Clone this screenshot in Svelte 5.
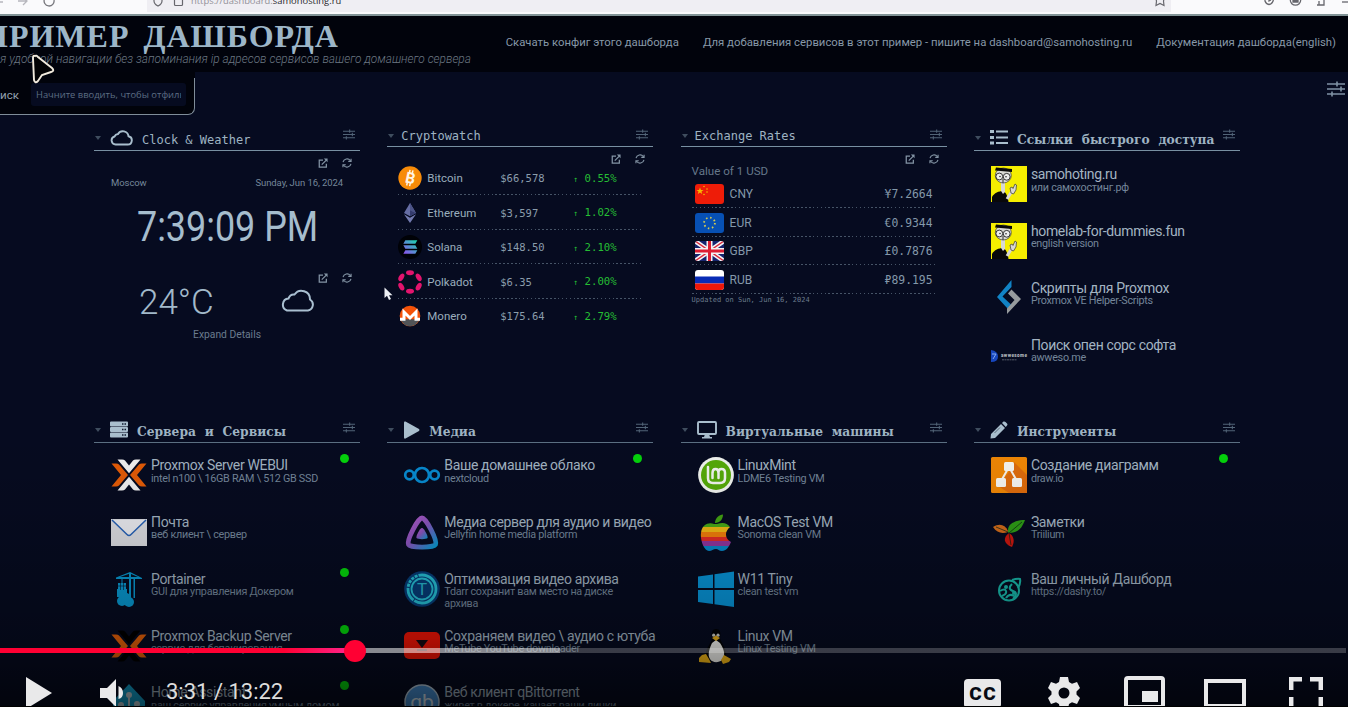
<script>
  const cross = (inner, outer) => `<path d="M6.500 2.500H11Q13 2.500 14 3.500L18 8.500L22 3.500Q23 2.500 25 2.500H29.500L18 16.300ZM6.500 33.500H11Q13 33.500 14 32.500L18 27.500L22 32.500Q23 33.500 25 33.500H29.500L18 19.700Z" fill="${inner}"/><path d="M.5 6.500H5Q7 6.500 8 7.500L17 18L8 28.500Q7 29.500 5 29.500H.5L10 18ZM35.500 6.500H31Q29 6.500 28 7.500L19 18L28 28.500Q29 29.500 31 29.500H35.500L26 18Z" fill="${outer}"/>`;
  const icons = {
    dummy: `<rect width="36" height="36" fill="#f5ee00"/><path d="M1 36V31C3 27 8 25 12 25C15 26 17 31 17.500 36Z" fill="#08080a"/><path d="M10 16h4v10l-2 2-2-3z" fill="#d8d8d4"/><ellipse cx="12.300" cy="9.500" rx="8" ry="7.500" fill="#d8d8d4" stroke="#222" stroke-width=".6"/><path d="M5 1.500L21 3V6L4 4.500Z" fill="#090909"/><circle cx="8.300" cy="10.500" r="3.400" fill="#eee" stroke="#222" stroke-width=".9"/><circle cx="15.700" cy="10.800" r="3.400" fill="#eee" stroke="#222" stroke-width=".9"/><circle cx="9" cy="10.500" r=".7"/><circle cx="15" cy="10.800" r=".7"/><path d="M12 13v4" stroke="#333"/><path d="M16 33L21 25" stroke="#d8d8d4" stroke-width="3"/><path d="M20 27L19 22L21 21L22 22.500L24 18L25.500 19L25 24L22.500 28Z" fill="#d8d8d4" stroke="#333" stroke-width=".7"/>`,
    scripts: `<path d="M20.500 1V8L11.500 17.500L20 25.500L16.500 29.500L6 18Z" fill="#1183c5" transform="translate(0 -1)"/><path d="M20.500 9.500L30 19L16 34V28.500L23.500 20L17 13.500Z" fill="#969b9d"/>`,
    awwesome: `<path d="M0 13Q7 14 7 19.500Q7 25 0 25Z" fill="#1746bd"/><path d="M1 17h4l-3 5" fill="none" stroke="#83a9ed"/><text x="10" y="20" font-family="Roboto" font-weight="900" font-size="4.600" fill="#b3b8bd" textLength="26">awwesome</text><path d="M11 22.800h15" stroke="#69717c" stroke-width=".8" stroke-dasharray="2 .5"/>`,
    proxmox: cross('#f1f1f1', '#e35b07'),
    mail: `<rect y="5" width="36" height="27" fill="#d9dadf"/><path d="M1 6H35L20 21Q18 23 16 21Z" fill="#e9eaef"/><path d="M1 6L16 20.500Q18 22.500 20 20.500L35 6" fill="none" stroke="#2761b5" stroke-width="1.500"/>`,
    portainer: `<g fill="#0898d0"><path d="M5 6.500L19 1L31 7V8H5Z"/><path d="M9 6L19 2.500L27 6Z" fill="#071022"/><path d="M18 2h2v26h-2zM22.500 7h1.500v20h-1.500zM10.500 7h1v6h-1z"/><path d="M7 12h8v8H7zM6 18h10v8H6z"/><circle cx="11" cy="30" r="5"/><circle cx="18" cy="31" r="5"/><circle cx="15" cy="27" r="5"/></g><path d="M7 15h8M9.500 12v7M12.500 12v7" stroke="#061225" stroke-width=".6"/>`,
    backup: cross('#000', '#e35f08'),
    home: `<path d="M18 0L34 17V35H2V17Z" fill="#12a6d3"/><path d="M18 12V34M18 28L26 21M18 29L10 22" stroke="#c9d8dd" stroke-width="2"/><circle cx="18" cy="11" r="3" fill="#c9d8dd"/><circle cx="26" cy="20" r="3" fill="#c9d8dd"/><circle cx="10" cy="21" r="3" fill="#c9d8dd"/>`,
    nextcloud: `<g fill="none" stroke="#078ad0" stroke-width="2.700"><circle cx="18" cy="18" r="7"/><circle cx="5.500" cy="18" r="4.300"/><circle cx="30.500" cy="18" r="4.300"/></g>`,
    jellyfin: `<defs><linearGradient id="jelly" x1="0" y1="0" x2="1" y2="1"><stop stop-color="#b35aca"/><stop offset=".45" stop-color="#8753bb"/><stop offset="1" stop-color="#0798ce"/></linearGradient></defs><path d="M18 4C22 4 33.500 26 31.500 30.500C29.500 34 6.500 34 4.500 30.500C2.500 26 14 4 18 4Z" fill="none" stroke="url(#jelly)" stroke-width="4.800"/><path d="M18 14C20 14 24.500 22.500 23.500 24C22.500 25.500 13.500 25.500 12.500 24C11.500 22.500 16 14 18 14Z" fill="url(#jelly)"/>`,
    tdarr: `<circle cx="18" cy="18" r="17.800" fill="#063c76"/><g fill="none" stroke="#26bcd2"><circle cx="18" cy="18" r="14" stroke-width="2.800" stroke-dasharray="30 1 14 1 3 1 3 1 3 1 3 1"/><circle cx="18" cy="18" r="10.500" stroke-width="1.800"/></g><text x="18" y="24" text-anchor="middle" font-family="Roboto" font-size="17" fill="#26b4c9">T</text>`,
    metube: `<rect y="4" width="36" height="27" rx="5" fill="#f01405"/><path d="M12 12H24L18 20Z" fill="#150a12"/><path d="M13 22h10" stroke="#6c2022" stroke-width="2"/>`,
    qb: `<circle cx="18" cy="18" r="17" fill="#4790d4" stroke="#b9cddd" stroke-width="1.500"/><text x="18" y="24.500" text-anchor="middle" font-family="Roboto" font-size="21" fill="#dceaf4">qb</text>`,
    mint: `<circle cx="18" cy="18" r="17.900" fill="#f1f4ef"/><circle cx="18" cy="18" r="15" fill="#55aa08"/><path d="M10 10V21Q10 26 15 26H22Q27 26 27 21V16Q27 12 23.500 12Q20.500 12 20.500 15V21M20.500 16Q20.500 12 17.500 12Q14.500 12 14.500 16V21" fill="none" stroke="#f2f5ef" stroke-width="2.500" stroke-linecap="round"/>`,
    apple: `<defs><clipPath id="appleClip"><path d="M19 10C25 8 29 9 32 13C26 18 27 25 33 28C31 33 28 37 24 37C21 37 20 35 18 35C15 35 14 37 11 37C6 37 2 26 3 19C4 10 11 8 16 10Z"/></clipPath></defs><path d="M17 9C17 4 21 1 25 .5C25 5 22 9 17 9Z" fill="#43a313"/><g clip-path="url(#appleClip)"><path d="M0 8h36v5H0z" fill="#48a817"/><path d="M0 13h36v5H0z" fill="#eeb714"/><path d="M0 18h36v5H0z" fill="#ef7d0b"/><path d="M0 23h36v4H0z" fill="#df2b26"/><path d="M0 27h36v5H0z" fill="#8e359b"/><path d="M0 32h36v5H0z" fill="#0786c5"/></g>`,
    windows: `<path d="M0 5.500L15 3.500V17H0ZM16.500 3.200L36 .5V17H16.500ZM0 19H15V33L0 31ZM16.500 19H36V36L16.500 33.200Z" fill="#0793d6"/>`,
    tux: `<path d="M18 1C14 1 13 5 14 10C14 15 7 20 8 28C9 36 28 36 28 28C29 21 23 15 22 10C23 4 22 1 18 1Z" fill="#020305"/><path d="M14 15L18 12L22 15C26 21 28 27 24 32C21 35 14 35 12 31C9 27 12 19 14 15Z" fill="#f4f4f0"/><circle cx="15.700" cy="7.200" r="1.600" fill="#cfcfc8"/><circle cx="20" cy="7.200" r="1.600" fill="#cfcfc8"/><path d="M14 10L18 7.500L22 10L18 13Z" fill="#e7ae19"/><path d="M4 27L8 26L11 31L13 35L1 34L1 30ZM26 27L33 31L31 34L25 36L23 32Z" fill="#f4b817"/>`,
    drawio: `<rect width="36" height="36" rx="1.500" fill="#f08705"/><path d="M23 5L36 18V36H18L7 29L18 15Z" fill="#df6c0c"/><path d="M18 10L10 24M18 10L26 24" stroke="#f6f3ef" stroke-width="2"/><g fill="#f7f6f2"><rect x="13" y="5" width="10" height="9" rx="1.500"/><rect x="5" y="21" width="10" height="9" rx="1.500"/><rect x="21" y="21" width="10" height="9" rx="1.500"/></g>`,
    trilium: `<path d="M17 18C16 10 24 6 34 6C31 14 27 19 18 19Z" fill="#2d9c16"/><path d="M17 17C14 10 8 9 2 13C6 19 11 20 17 18Z" fill="#cf6a1a"/><path d="M18 19C12 23 12 30 21 33C24 27 23 22 18 19Z" fill="#c8160e"/><path d="M18 19L31 8M17 18L5 13M18 19L20 31" stroke="#082014" stroke-width=".7"/>`,
    dashy: `<g fill="none" stroke="#18b3a6" stroke-width="2"><circle cx="18" cy="19.500" r="10"/><path d="M21 9Q27 7 29 8Q30 12 27 17M9 20Q14 17 15 20T11 25M21 13Q16 18 22 20T22 28M15 27Q18 22 23 25"/></g><circle cx="15" cy="16" r="2" fill="#18b3a6"/><circle cx="23" cy="22" r="2" fill="#18b3a6"/>`,
    btc: `<circle cx="18" cy="18" r="17.500" fill="#f78b08"/><g transform="rotate(12 18 18)"><path d="M15.500 6V11M20 6V11M15.500 25V30M20 25V30" stroke="#fff4e4" stroke-width="2.200"/><text x="18.500" y="26" text-anchor="middle" font-family="Roboto" font-weight="700" font-size="23" fill="#fff4e4">B</text></g>`,
    eth: `<path d="M18 3L27 18L18 23L9 18Z" fill="#656da4"/><path d="M18 3L27 18L18 14Z" fill="#4c5487"/><path d="M18 14L27 18L18 23Z" fill="#343b6d"/><path d="M9 20L18 25L27 20L18 33Z" fill="#737bb0"/>`,
    sol: `<defs><linearGradient id="sol" x1="0" y1="1" x2="1" y2="0"><stop stop-color="#8f4df0"/><stop offset="1" stop-color="#18d9ad"/></linearGradient></defs><circle cx="18" cy="18" r="18" fill="#000207"/><path d="M11 8H29L26 13H8ZM8 15.500H26L29 20.500H11ZM11 23H29L26 28H8Z" fill="url(#sol)"/>`,
    dot: `<g fill="#e3146d"><ellipse cx="18" cy="4" rx="6" ry="3.700"/><ellipse cx="18" cy="32" rx="6" ry="3.700"/><ellipse cx="5" cy="11" rx="3.700" ry="6.200" transform="rotate(30 5 11)"/><ellipse cx="31" cy="11" rx="3.700" ry="6.200" transform="rotate(-30 31 11)"/><ellipse cx="5" cy="25" rx="3.700" ry="6.200" transform="rotate(-30 5 25)"/><ellipse cx="31" cy="25" rx="3.700" ry="6.200" transform="rotate(30 31 25)"/></g>`,
    xmr: `<circle cx="18" cy="18" r="15.500" fill="#f45208"/><path d="M4 23H32Q28 33.500 18 33.500Q8 33.500 4 23Z" fill="#515457"/><path d="M3 23H9V12L18 21L27 12V23H33" fill="none" stroke="#fff" stroke-width="4.500"/>`,
    cn: `<rect width="29" height="20" fill="#ee1c08"/><path d="M5 3.500L6 6H8.500L6.500 7.500L7.200 10L5 8.500L2.800 10L3.500 7.500L1.500 6H4Z" fill="#f6b900"/><g fill="#f6b900"><circle cx="9" cy="2.500" r=".8"/><circle cx="12" cy="5" r=".8"/><circle cx="12" cy="8" r=".8"/><circle cx="9" cy="10.500" r=".8"/></g>`,
    eu: `<rect width="29" height="20" fill="#0750b4"/><circle cx="14.500" cy="10" r="5.400" fill="none" stroke="#d4cc54" stroke-width="1.800" stroke-dasharray="1.500 2.740"/>`,
    gb: `<rect width="29" height="20" fill="#16246e"/><path d="M0 0L29 20M29 0L0 20" stroke="#f4f2f4" stroke-width="4.500"/><path d="M0 0L29 20M29 0L0 20" stroke="#dc2638" stroke-width="1.400"/><path d="M14.500 0V20M0 10H29" stroke="#f4f2f4" stroke-width="6"/><path d="M14.500 0V20M0 10H29" stroke="#dd1d32" stroke-width="3"/>`,
    ru: `<rect width="29" height="20" fill="#fff"/><path d="M0 6.500H29V13.500H0Z" fill="#082bb5"/><path d="M0 13.500H29V20H0Z" fill="#ed1708"/>`
  };
  const glyphs = {
    cloud: { w: 23, h: 17, d: `<path d="M6 15.500H17.500A4.200 4.200 0 0 0 18.500 7.200A5.700 5.700 0 0 0 8 5A4.200 4.200 0 0 0 4.500 7.500A4.100 4.100 0 0 0 6 15.500Z" fill="none" stroke="currentColor" stroke-width="1.900"/>` },
    list: { w: 18, h: 16, d: `<path d="M0 1h4v3H0zM0 7h4v3H0zM0 12.500h4v3H0zM6 1.500h12v2H6zM6 7.500h12v2H6zM6 13h12v2H6z" fill="currentColor"/>` },
    server: { w: 18, h: 17, d: `<path d="M1 .5h16q1 0 1 1v3q0 1-1 1H1q-1 0-1-1v-3q0-1 1-1ZM1 6h16q1 0 1 1v3q0 1-1 1H1q-1 0-1-1V7q0-1 1-1ZM1 11.500h16q1 0 1 1v3q0 1-1 1H1q-1 0-1-1v-3q0-1 1-1Z" fill="currentColor"/><path d="M12 3h1.500M14.500 3H16M12 8.500h1.500M14.500 8.500H16M12 14h1.500M14.500 14H16" stroke="#101b30" stroke-width="1.300"/>` },
    play: { w: 17, h: 18, d: `<path d="M1 1.500Q1 0 2.500 .6L16 8Q17 9 16 10L2.500 17.500Q1 18 1 16.500Z" fill="currentColor"/>` },
    desktop: { w: 20, h: 18, d: `<rect x="1" y="1" width="18" height="12" rx="1" fill="none" stroke="currentColor" stroke-width="1.900"/><path d="M8 13h4l1 3h2v1.600H5V16h2z" fill="currentColor"/>` },
    pen: { w: 18, h: 18, d: `<path d="M1 13L11 3L15 7L5 17L.5 17.500ZM12 2L13.500 .6Q14.500 0 15.500 1L17 2.500Q18 3.500 17 4.600L15.800 6Z" fill="currentColor"/><path d="M4.500 12L10 6.500" stroke="#07101f" stroke-width=".5"/>` }
  };
  const rows = [
    [
      { kind: 'clock', title: 'Clock & Weather', glyph: 'cloud' },
      { kind: 'crypto', title: 'Cryptowatch' },
      { kind: 'rates', title: 'Exchange Rates' },
      { kind: 'links', title: 'Ссылки быстрого доступа', glyph: 'list', serif: true, items: [
        ['dummy', 'samohoting.ru', 'или самохостинг.рф'], ['dummy', 'homelab-for-dummies.fun', 'english version'],
        ['scripts', 'Скрипты для Proxmox', 'Proxmox VE Helper-Scripts'], ['awwesome', 'Поиск опен сорс софта', 'awweso.me']] }
    ],
    [
      { kind: 'links', title: 'Сервера и Сервисы', glyph: 'server', serif: true, items: [
        ['proxmox', 'Proxmox Server WEBUI', 'intel n100 \\ 16GB RAM \\ 512 GB SSD', true], ['mail', 'Почта', 'веб клиент \\ сервер'],
        ['portainer', 'Portainer', 'GUI для управления Докером', true], ['backup', 'Proxmox Backup Server', 'сервис для бепакирования', true],
        ['home', 'Home Assistant', 'ваш сервис управления умным домом', true]] },
      { kind: 'links', title: 'Медиа', glyph: 'play', serif: true, items: [
        ['nextcloud', 'Ваше домашнее облако', 'nextcloud', true], ['jellyfin', 'Медиа сервер для аудио и видео', 'Jellyfin home media platform'],
        ['tdarr', 'Оптимизация видео архива', 'Tdarr сохранит вам место на диске архива'], ['metube', 'Сохраняем видео \\ аудио с ютуба', 'MeTube YouTube downloader'],
        ['qb', 'Веб клиент qBittorrent', 'живет в докере, качает ваши линки']] },
      { kind: 'links', title: 'Виртуальные машины', glyph: 'desktop', serif: true, items: [
        ['mint', 'LinuxMint', 'LDME6 Testing VM'], ['apple', 'MacOS Test VM', 'Sonoma clean VM'], ['windows', 'W11 Tiny', 'clean test vm'], ['tux', 'Linux VM', 'Linux Testing VM']] },
      { kind: 'links', title: 'Инструменты', glyph: 'pen', serif: true, items: [
        ['drawio', 'Создание диаграмм', 'draw.io', true], ['trilium', 'Заметки', 'Triilium'], ['dashy', 'Ваш личный Дашборд', 'https://dashy.to/']] }
    ]
  ];
  const coins = [['btc', 'Bitcoin', '$66,578', '0.55%'], ['eth', 'Ethereum', '$3,597', '1.02%'], ['sol', 'Solana', '$148.50', '2.10%'], ['dot', 'Polkadot', '$6.35', '2.00%'], ['xmr', 'Monero', '$175.64', '2.79%']];
  const rates = [['cn', 'CNY', '¥7.2664'], ['eu', 'EUR', '€0.9344'], ['gb', 'GBP', '£0.7876'], ['ru', 'RUB', '₽89.195']];
</script>

{#snippet sliders(cls)}
  <svg class={cls} viewBox="0 0 18 16" fill="none" stroke="currentColor" stroke-width="1.600"><path d="M0 3H18M0 8H18M0 13H18M10 .5V5.500M14 5.500V10.500M5 10.500V15.500" /></svg>
{/snippet}
{#snippet actions()}
  <div class="actions">
    <svg viewBox="0 0 12 12" fill="none" stroke="currentColor" stroke-width="1.500"><path d="M6 2.500H1.500V11H10V7M4.500 8L10 2.500" /><path d="M7 .5H11.500V5Z" fill="currentColor" stroke="none" /></svg>
    <svg viewBox="0 0 12 12" fill="none" stroke="currentColor" stroke-width="1.300"><path d="M1.200 5A5 5 0 0 1 10 3M10.800 7A5 5 0 0 1 2 9M10.900 .8V4H7.500M1.100 11.200V8H4.500" /></svg>
  </div>
{/snippet}

<div class="screen">
  <div class="browser">
    <svg class="nav-icons" viewBox="0 0 147 15" fill="none" stroke="#77777d" stroke-width="1.300"><path d="M0 2H3M18 1H27M23-3L27 1L23 5" stroke="#b7b7bd" /><path d="M44.500-1A5 5 0 1 0 54 0" /></svg>
    <div class="url">
      <svg viewBox="0 0 40 15" fill="none" stroke="#67676d" stroke-width="1.200"><path d="M7-2V1Q7 4 11 6Q15 4 15 1V-2" /><rect x="27.500" y="-1" width="8" height="6.500" rx="1" /></svg>
      <p>https://dashboard.<b>samohosting.ru</b></p>
      <svg class="star" viewBox="0 0 14 15" fill="none" stroke="#67676d" stroke-width="1.200"><path d="M3-1L3.500 1L3 5.500L7 3.500L11 5.500L10.500 1L11-1" /></svg>
    </div>
    <svg class="tools" viewBox="0 0 90 15" fill="none" stroke="#67676d" stroke-width="1.300"><path d="M7-2V1Q8 4 11 4.500Q15 4 15.500-1M11-1V1L13 0" /><circle cx="37.500" cy="0" r="5.200" /><path d="M35 2H40V0H35Z" fill="#67676d" /><path d="M58-1H66V5H59M61 1V5" /><path d="M84 2H90" /></svg>
  </div>

  <header>
    <div class="brand"><h1>ПРИМЕР ДАШБОРДА</h1><p>я удобной навигации без запоминания ip адресов сервисов вашего домашнего сервера</p></div>
    <nav><span>Скачать конфиг этого дашборда</span><span>Для добавления сервисов в этот пример - пишите на dashboard@samohosting.ru</span><span>Документация дашборда(english)</span></nav>
  </header>

  <div class="toolbar">
    <div class="search"><span>Поиск</span><div class="field">Начните вводить, чтобы отфильтровать</div></div>
    {@render sliders('settings')}
  </div>

  <main>
    {#each rows as row, r}
      <div class="grid" class:second={r === 1}>
        {#each row as s}
          <section>
            <div class="head" class:short={!s.glyph}>
              <i class="caret"></i>
              {#if s.glyph}<svg class="glyph" style="width:{glyphs[s.glyph].w}px;height:{glyphs[s.glyph].h}px" viewBox="0 0 {glyphs[s.glyph].w} {glyphs[s.glyph].h}">{@html glyphs[s.glyph].d}</svg>{/if}
              <h2 class:serif={s.serif}>{s.title}</h2>
              {@render sliders('tune')}
            </div>
            {#if s.kind === 'clock'}
              {@render actions()}
              <div class="place"><span>Moscow</span><span>Sunday, Jun 16, 2024</span></div>
              <div class="time"><span>7:39:09 PM</span></div>
              {@render actions()}
              <div class="weather"><span>24°C</span><svg viewBox="0 0 36 24" fill="none" stroke="#a9bfd0" stroke-width="2"><path d="M8 21.500H29A6 6 0 0 0 31 10.500A8.500 8.500 0 0 0 15.500 5.500Q11 5 9.500 9.500A6.200 6.200 0 0 0 8 21.500Z" /></svg></div>
              <p class="expand">Expand Details</p>
            {:else if s.kind === 'crypto'}
              {@render actions()}
              <div class="coins">
                {#each coins as c}<div class="coin"><svg viewBox="0 0 36 36">{@html icons[c[0]]}</svg><span>{c[1]}</span><span class="price">{c[2]}</span><span class="change"><small>↑</small> {c[3]}</span></div>{/each}
              </div>
            {:else if s.kind === 'rates'}
              {@render actions()}
              <div class="rates"><p class="base">Value of 1 USD</p>
                {#each rates as q}<div class="rate"><svg viewBox="0 0 29 20">{@html icons[q[0]]}</svg><span>{q[1]}</span><b>{q[2]}</b></div>{/each}
                <p class="updated">Updated on Sun, Jun 16, 2024</p>
              </div>
            {:else}
              <div class="items">
                {#each s.items as it}
                  <div class="item"><svg viewBox="0 0 36 36">{@html icons[it[0]]}</svg><div class="text"><h3>{it[1]}</h3><p>{it[2]}</p></div>{#if it[3]}<i class="status"></i>{/if}</div>
                {/each}
              </div>
            {/if}
          </section>
        {/each}
      </div>
    {/each}
  </main>

  <div class="shade"></div>
  <div class="player">
    <div class="track"><div class="buffered"></div><div class="played"></div><div class="knob"></div></div>
    <div class="controls">
      <svg class="c-play" viewBox="0 0 26 32" fill="#e9e9ea"><path d="M0 0L26 16L0 32Z" /></svg>
      <svg class="c-vol" viewBox="0 0 25 28" fill="#e9e9ea"><path d="M0 9H7L16 0V28L7 19H0ZM18.500 7Q23 9 23 14T18.500 20Z" /></svg>
      <span class="elapsed">3:31 / 13:22</span>
      <div class="right">
        <div class="cc">CC</div>
        <svg class="gear" viewBox="0 0 32 32" fill="#e9e9ea" fill-rule="evenodd"><path d="M12 0H20L21 5L24 6.700L29 5L32 11L28.500 14.500V17.500L32 21L29 27L24 25.300L21 27L20 32H12L11 27L8 25.300L3 27L0 21L3.500 17.500V14.500L0 11L3 5L8 6.700L11 5ZM16 10.500A5.500 5.500 0 1 0 16 21.500A5.500 5.500 0 1 0 16 10.500Z" /></svg>
        <svg class="mini" viewBox="0 0 41 36"><rect x="2" y="2" width="37" height="29" rx="2" fill="none" stroke="#e9e9ea" stroke-width="4" /><path d="M18 15H34V26H18Z" fill="#e9e9ea" /></svg>
        <svg class="wide" viewBox="0 0 42 36"><rect x="2" y="2" width="38" height="25" fill="none" stroke="#e9e9ea" stroke-width="4" /></svg>
        <svg class="full" viewBox="0 0 34 34" fill="none" stroke="#e9e9ea" stroke-width="4.500"><path d="M2.200 13V2.200H13M21 2.200H31.800V13M2.200 20V32H13M21 32H31.800V20" /></svg>
      </div>
    </div>
  </div>
  <svg class="pointer-large" viewBox="0 0 26 31"><path d="M4 2Q2 1 2 4L3 26Q4 30 7 27L11 21L20 18Q24 17 21 14L7 3Q5 1 4 2Z" fill="#020204" stroke="#f1eadd" stroke-width="1.900" /></svg>
  <svg class="pointer-small" viewBox="0 0 9 14"><path d="M.5 .5V11L3 8.800L5 13L7 12L5 8.200H8.500Z" fill="#edf0f4" /></svg>
</div>

<style>
  :global(body) { margin: 0; background: #060b20; }
  .screen { position: relative; width: 1348px; height: 707px; overflow: hidden; background: #060b20; font-family: Roboto, sans-serif; color: #a5b5c2; }
  h1, h2, h3, p { margin: 0; }
  svg { display: block; flex: none; }
  .browser { display: flex; height: 14px; background: #fafafc; border-bottom: 2px solid #819396; overflow: hidden; }
  .nav-icons { width: 147px; height: 15px; }
  .url { width: 1026px; height: 12px; display: flex; background: #efeef3; }
  .url svg { width: 40px; height: 15px; }
  .url p { margin-left: 4px; font: 9.400px/14px "Open Sans", sans-serif; margin-top: -6px; color: #929198; white-space: nowrap; }
  .url b { font-weight: 400; color: #28282c; }
  .url .star { width: 14px; margin-left: auto; margin-right: 4px; }
  .tools { width: 90px; height: 15px; margin-left: 87px; }
  header { height: 56px; background: #01030c; display: flex; justify-content: space-between; }
  .brand { white-space: nowrap; padding-top: 2px; }
  h1 { margin-left: -17px; font: 700 32px/36px "Liberation Serif", serif; letter-spacing: 1px; word-spacing: 5px; color: #9db6c8; }
  .brand p { margin-top: -2px; font: italic 300 11.900px/14px Roboto, sans-serif; color: #8593a0; opacity: .8; }
  nav { display: flex; gap: 24px; padding: 19px 12px 0 0; font-size: 11.350px; line-height: 15px; color: #8798a8; white-space: nowrap; }
  .toolbar { height: 52px; display: flex; justify-content: space-between; }
  .search { box-sizing: border-box; width: 195px; height: 37px; margin-top: 6px; padding-bottom: 3px; display: flex; align-items: center; gap: 12px; background: #01030b; box-shadow: 0 -6px #01030b; border: solid #7f8d99; border-width: 0 1px 1px 0; border-radius: 0 0 7px 0; }
  .search span { width: 19px; display: flex; justify-content: flex-end; font-size: 11.500px; color: #93a1b0; }
  .field { width: 145px; height: 23px; border: solid #060b20; border-width: 0 5px; background: #060b20; border-radius: 3px; font: 9.400px/24px "Open Sans", sans-serif; color: #5d6e84; white-space: nowrap; overflow: hidden; }
  .settings { width: 18px; height: 16px; margin: 9px 3px; color: #8093a5; }
  main { padding-left: 94px; }
  .grid { display: grid; grid-template-columns: repeat(4, 266px); column-gap: 27.300px; height: 293px; }
  .head { box-sizing: border-box; height: 27px; display: flex; align-items: center; border-bottom: 1px solid #7890a2; }
  .head.short { height: 23px; }
  .second .head { height: 26px; border-color: #5c7083; border-bottom-width: 1.500px; }
  .caret { width: 0; border: 3.500px solid transparent; border-top: 4px solid #3f4d5e; border-bottom: 0; margin: 1px 9px 0 1px; }
  .short .caret { margin-right: 7px; }
  .glyph { color: #a9becd; margin-right: 9px; }
  h2 { font: 400 12px/16px "DejaVu Sans Mono", monospace; color: #9eb3c2; white-space: nowrap; padding-top: 5px; }
  .short h2 { padding-top: 2px; }
  h2.serif { font: 700 12.250px/16px "DejaVu Serif", serif; word-spacing: 4.500px; padding-top: 5px; }
  .tune { width: 12px; height: 11px; margin: 5px 5px auto auto; color: #526477; }
  .actions { display: flex; justify-content: flex-end; gap: 14px; padding: 7px 8px 0 0; height: 10px; color: #8495a5; }
  .actions svg { width: 10px; height: 10px; }
  .place { display: flex; justify-content: space-between; margin: 8px 17px 0; font-size: 9.500px; letter-spacing: -.08px; line-height: 14px; color: #75879a; }
  .time { height: 32px; margin: 20px 0 24px 43px; display: flex; align-items: center; }
  .time span { font-size: 43px; line-height: 32px; color: #a6bdcd; white-space: nowrap; transform: scaleX(.835); transform-origin: left; }
  .weather { display: flex; align-items: center; justify-content: space-between; height: 34px; padding: 0 45px 0 45px; margin-top: 2px; }
  .weather span { font-size: 35px; font-weight: 300; color: #a2b9ca; }
  .weather svg { width: 36px; height: 24px; margin-top: -2px; }
  .expand { margin-top: 9px; text-align: center; font-size: 10.300px; line-height: 14px; color: #6b7c8e; }
  .coins { margin: -3px 11px 0; }
  .coin, .rate { background: repeating-linear-gradient(90deg, #465467 0 1.500px, transparent 1.500px 3.900px) 0 100% / 100% 1.300px no-repeat; }
  .coin { height: 34.500px; display: grid; grid-template-columns: 24px 78px 73px 1fr; align-items: center; font-size: 11.500px; color: #9aadbc; }
  .coin:last-child { background: none; }
  .coin svg { width: 24px; height: 24px; }
  .coin svg + span { padding-left: 5px; }
  .price, .change { font: 10.500px "DejaVu Sans Mono", monospace; color: #8b9dac; }
  .change { color: #25bd34; font-size: 10.700px; }
  small { font-size: 8px; }
  .rates { margin: 0 11px; }
  .base { font-size: 11.600px; line-height: 14px; color: #65778a; margin-bottom: 1.500px; }
  .rate { height: 28.700px; display: flex; align-items: center; gap: 6px; padding: 0 3px; font-size: 12px; color: #8498aa; }
  .rate svg { width: 29px; height: 20px; border-radius: 3px; }
  .rate b { margin-left: auto; font: 11.400px "DejaVu Sans Mono", monospace; }
  .updated { font: 7px/12px "DejaVu Sans Mono", monospace; color: #6b7c8d; }
  .items { padding: 15px 0 0 17px; }
  .second .items { padding-top: 14px; }
  .item { position: relative; height: 56.850px; display: flex; gap: 4px; }
  .item svg { width: 36px; height: 36px; overflow: visible; }
  .text { width: 209px; }
  h3 { font-size: 14px; letter-spacing: -.35px; font-weight: 400; line-height: 16px; color: #a3b4c2; white-space: nowrap; }
  .text p { width: 180px; font-size: 10.800px; letter-spacing: -.28px; line-height: 12px; margin-top: -.5px; color: #74869a; }
  .item:nth-child(n + 4) .text p { width: auto; white-space: nowrap; }
  .status { position: absolute; left: 228.500px; top: -3px; width: 9px; height: 9px; border-radius: 50%; background: #04d40b; }
  .shade { position: absolute; inset: 430px 0 0; background: linear-gradient(#0000, rgba(0,0,0,.1) 40%, rgba(0,0,0,.27) 75%, rgba(0,0,0,.6)); }
  .player { position: absolute; left: 0; right: 0; top: 648px; height: 58px; overflow: visible; border-bottom: 1px solid #000; }
  .track { position: relative; width: 1346px; height: 5px; background: rgba(255,255,255,.21); }
  .buffered, .played { position: absolute; left: 0; top: 0; height: 5px; }
  .buffered { width: 560px; background: rgba(255,255,255,.4); }
  .played { width: 355px; background: linear-gradient(90deg, #ff0033 80%, #ff2791); }
  .knob { position: absolute; left: 344px; top: -8.500px; width: 22px; height: 22px; border-radius: 50%; background: #f03; }
  .controls { display: flex; height: 53px; overflow: hidden; padding: 0 25px 0 26px; color: #eee; }
  .c-play { width: 26px; height: 32px; margin-top: 24px; }
  .c-vol { width: 25px; height: 28px; margin: 26px 0 0 48px; }
  .elapsed { margin: 25px 0 0 41px; font-size: 22px; line-height: 28px; color: #ddd; }
  .right { margin-left: auto; display: flex; align-items: flex-start; }
  .cc { width: 37px; height: 29px; margin-top: 26px; border-radius: 4px; background: #e9e9ea; color: #080b14; text-align: center; font: 900 19px/29px Roboto, sans-serif; letter-spacing: 1.500px; text-indent: 1.500px; }
  .gear { width: 32px; height: 32px; margin: 24px 0 0 47px; }
  .mini { width: 41px; height: 36px; margin: 23px 0 0 44px; }
  .wide { width: 42px; height: 36px; margin: 26px 0 0 39px; }
  .full { width: 34px; height: 34px; margin: 24px 0 0 43px; }
  .pointer-large { position: absolute; left: 31px; top: 54px; width: 26px; height: 31px; }
  .pointer-small { position: absolute; left: 384px; top: 287px; width: 9px; height: 14px; }
</style>
